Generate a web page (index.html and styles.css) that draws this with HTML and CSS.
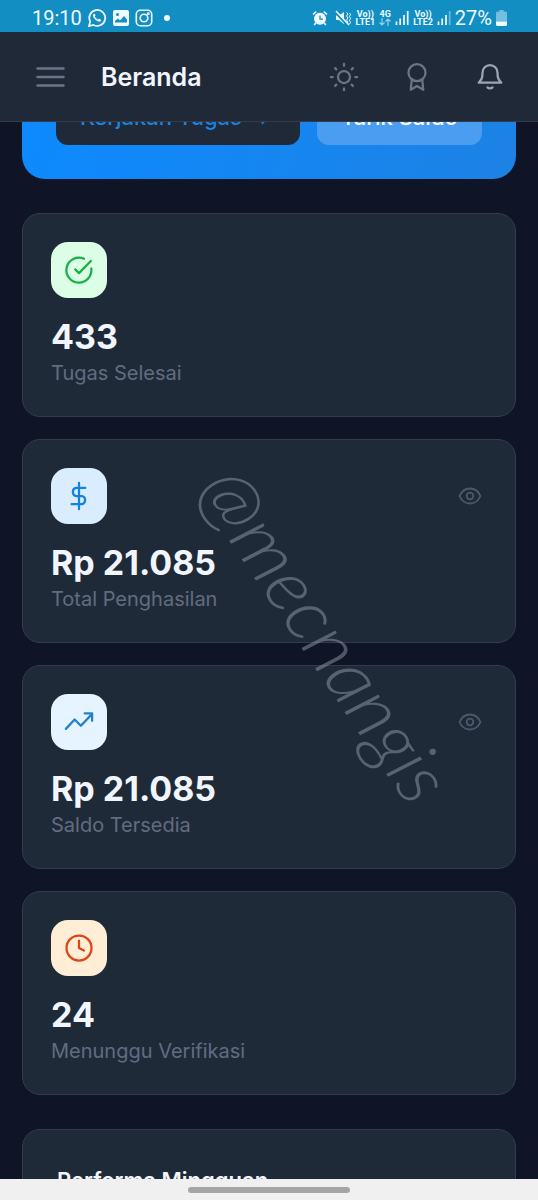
FILE: index.html
```html
<!DOCTYPE html>
<html lang="id">
<head>
<meta charset="utf-8">
<meta name="viewport" content="width=device-width, initial-scale=1">
<title>Beranda</title>
<link rel="stylesheet" href="styles.css">
</head>
<body>
<div class="status">
  <span class="clock">19:10</span>
  <svg class="s20" viewBox="0 0 20 20" fill="none" stroke="currentColor" stroke-width="1.7"><path d="M2 18l1.200-4.300A8 8 0 1 1 6.500 17z"/><path d="M6.700 5.800c-1.500 1-.8 3.400 1.300 5.500s4.500 3.300 5.800 1.700c.4-.7.3-1.300-.2-1.500l-1.400-.7c-.5-.2-.8.100-1.200.6-1.300-.4-2.700-1.700-3.100-2.900.6-.5.7-.8.5-1.200l-.6-1.300c-.3-.4-.7-.4-1.100-.2z" fill="currentColor" stroke="none"/></svg>
  <svg class="s18" viewBox="0 0 18 18"><path fill="currentColor" fill-rule="evenodd" d="M3 1h12a2 2 0 0 1 2 2v12a2 2 0 0 1-2 2H3a2 2 0 0 1-2-2V3a2 2 0 0 1 2-2zm0 12.500h12v-3L12 7l-4 4.500-2-2-3 2.500zM5.500 4a1.500 1.500 0 1 0 0 3 1.500 1.500 0 0 0 0-3z"/></svg>
  <svg class="s18" viewBox="0 0 18 18" fill="none" stroke="currentColor" stroke-width="1.600"><rect x="1.300" y="1.300" width="15.400" height="15.400" rx="4"/><circle cx="9" cy="9" r="3.800"/><circle cx="13.300" cy="4.700" r=".6"/></svg>
  <span class="dot"></span>
  <div class="status-right">
    <svg class="s16" viewBox="0 0 16 16"><circle cx="8" cy="8.800" r="6" fill="currentColor"/><path d="M1 4.500L4.200 1.700M15 4.500l-3.200-2.800M3.700 13l-1.500 2M12.300 13l1.500 2" stroke="currentColor" stroke-width="1.600"/><path d="M8 5.500v3.600h3" stroke="#128ec3" stroke-width="1.300" fill="none"/></svg>
    <svg class="s16 mute" viewBox="0 0 16 16"><path d="M1 5.500h3L9 2v12l-5-4H1z" fill="currentColor"/><path d="M11.500 2.500l1.500 1.500-1.500 2L13 8l-1.500 2 1.500 2-1.500 2M14.500 3l1 1.500-1 2 1 2-1 2 1 2-1 1.500" stroke="currentColor" fill="none"/><path d="M0 2l12 13" stroke="#128ec3" stroke-width="2"/><path d="M1 1l13 14" stroke="currentColor" stroke-width="1.500"/></svg>
    <span class="net"><span>Vo))</span><span>LTE1</span></span>
    <span class="net"><span>4G</span><svg class="updown" viewBox="0 0 12 8" fill="none" stroke="currentColor" stroke-width="1.200"><path d="M3 0v7M.5 4.500L3 7l2.500-2.500M9 8V1M6.500 3.500L9 1l2.500 2.500"/></svg></span>
    <svg class="bars" viewBox="0 0 14 16" stroke="currentColor" stroke-width="1.700"><path d="M1.500 11.500v3.500M5.200 8.500v6.500M9 5v10M12.700 1v14"/></svg>
    <span class="net"><span>Vo))</span><span>LTE2</span></span>
    <svg class="bars" viewBox="0 0 14 16" stroke="currentColor" stroke-width="1.700"><path d="M1.500 11.500v3.500M5.200 8.500v6.500M9 5v10"/><path opacity=".4" d="M12.700 1v14"/></svg>
    <span class="pct">27%</span>
    <svg class="batt" viewBox="0 0 11 16" fill="currentColor"><path opacity=".45" d="M3.500 0h4v1.500H9.500A1.500 1.500 0 0 1 11 3v8.500H0V3a1.500 1.500 0 0 1 1.500-1.500h2z"/><path d="M0 11.500h11v3a1.500 1.500 0 0 1-1.500 1.500h-8A1.500 1.500 0 0 1 0 14.500z"/></svg>
  </div>
</div>

<header class="topbar">
  <button class="icon-btn" aria-label="Menu"><svg class="s34" viewBox="0 0 34 34"><path d="M4.500 8.500h26M4.500 17h26M4.500 25.500h26"/></svg></button>
  <h1>Beranda</h1>
  <div class="actions">
    <button class="icon-btn" aria-label="Tema"><svg class="s30" viewBox="0 0 24 24"><circle cx="12" cy="12" r="4.800"/><path d="M12 1.500v1.500M12 21v1.500M4.900 4.900l1 1M18.100 18.100l1 1M1.500 12H3M21 12h1.500M5.900 18.100l-1 1M19.100 4.900l-1 1"/></svg></button>
    <button class="icon-btn" aria-label="Peringkat"><svg class="s30" viewBox="0 0 24 24"><circle cx="12" cy="8.500" r="6.800"/><path d="M7.800 14L7 22.200l5-3 5 3-.8-8.200"/></svg></button>
    <button class="icon-btn bright" aria-label="Notifikasi"><svg class="s30" viewBox="0 0 24 24"><path d="M18 8.500A6 6 0 0 0 6 8.500c0 5-1.200 6-3 8h18C19.200 14.500 18 13.500 18 8.500zM10 20.300c1 1.100 3 1.100 4 0"/></svg></button>
  </div>
</header>

<main class="content">
  <section class="hero">
    <button class="hero-btn primary">Kerjakan Tugas <svg class="s22" viewBox="0 0 24 24"><path d="M9 5l7 7-7 7"/></svg></button>
    <button class="hero-btn ghost">Tarik Saldo</button>
  </section>

  <section class="stats">
    <article class="card">
      <div class="tile green"><svg class="s30" viewBox="0 0 24 24"><path d="M21.800 10.700A10 10 0 1 1 16 3"/><path d="M9 11.500l3 3 9.500-9.700"/></svg></div>
      <p class="value">433</p>
      <p class="label">Tugas Selesai</p>
    </article>
    <article class="card">
      <div class="tile blue"><svg class="s30" viewBox="0 0 24 24"><path d="M12 1.500v21M17 5.500H9.500a3.400 3.400 0 0 0 0 6.500h5a3.400 3.400 0 0 1 0 6.500H6"/></svg></div>
      <button class="eye" aria-label="Tampilkan penghasilan"><svg class="s24" viewBox="0 0 24 24"><path d="M1.500 12C6 2 18 2 22.500 12 18 22 6 22 1.500 12z"/><circle cx="12" cy="12" r="3.300"/></svg></button>
      <p class="value">Rp 21.085</p>
      <p class="label">Total Penghasilan</p>
    </article>
    <article class="card">
      <div class="tile sky"><svg class="s30" viewBox="0 0 24 24"><path d="M1.500 17.500L8.500 10l5 5 9-9.500M16.500 5h6v6"/></svg></div>
      <button class="eye" aria-label="Tampilkan saldo"><svg class="s24" viewBox="0 0 24 24"><path d="M1.500 12C6 2 18 2 22.500 12 18 22 6 22 1.500 12z"/><circle cx="12" cy="12" r="3.300"/></svg></button>
      <p class="value">Rp 21.085</p>
      <p class="label">Saldo Tersedia</p>
    </article>
    <article class="card">
      <div class="tile orange"><svg class="s30" viewBox="0 0 24 24"><circle cx="12" cy="12" r="10"/><path d="M12 6v6l4 2"/></svg></div>
      <p class="value">24</p>
      <p class="label">Menunggu Verifikasi</p>
    </article>
    <span class="watermark">@mecnangis</span>
  </section>

  <section class="card performance">
    <h2>Performa Mingguan</h2>
  </section>
</main>

<div class="gesture"><span class="handle"></span></div>
</body>
</html>
```
FILE: styles.css
```css
* { box-sizing: border-box; }
body {
  margin: 0;
  height: 100vh;
  display: flex;
  flex-direction: column;
  background: #0f1427;
  color: #f1f5fd;
  font-family: Inter, "Liberation Sans", sans-serif;
}
h1, h2, p { margin: 0; }
button {
  margin: 0;
  padding: 0;
  border: 0;
  background: none;
  color: inherit;
  font: inherit;
}
svg { display: block; flex: none; }
.s16 { width: 16px; height: 16px; }
.s18 { width: 18px; height: 18px; }
.s20 { width: 20px; height: 20px; }
.s22 { width: 22px; height: 22px; }
.s24 { width: 24px; height: 24px; }
.s30 { width: 30px; height: 30px; }
.s34 { width: 34px; height: 34px; }

.status {
  flex: none;
  display: flex;
  align-items: center;
  gap: 5px;
  height: 32px;
  padding: 4px 31px 0 32px;
  background: #128ec3;
  color: #f0fbff;
  font-family: Roboto, sans-serif;
}
.clock, .pct { font-size: 20px; line-height: 24px; }
.dot {
  width: 6px;
  height: 6px;
  margin-left: 6px;
  border-radius: 50%;
  background: currentColor;
}
.status-right {
  display: flex;
  align-items: center;
  gap: 4px;
  margin-left: auto;
}
.mute { margin: 0 1px 0 3px; }
.net {
  display: flex;
  flex-direction: column;
  align-items: center;
  font-size: 9px;
  line-height: 8px;
  font-weight: 700;
}
.updown { width: 12px; height: 8px; opacity: .6; }
.bars { width: 14px; height: 16px; }
.batt { width: 11px; height: 16px; }

.topbar {
  flex: none;
  display: flex;
  align-items: center;
  height: 90px;
  padding: 0 33px;
  background: #1f2937;
  border-bottom: 1px solid #323c4b;
}
.topbar h1 {
  margin-left: 34px;
  font-size: 25px;
  line-height: 32px;
  font-weight: 600;
}
.actions {
  display: flex;
  gap: 43px;
  margin-left: auto;
}
.icon-btn svg, .hero-btn svg, .tile svg, .eye svg {
  fill: none;
  stroke: currentColor;
  stroke-width: 1.8;
  stroke-linecap: round;
  stroke-linejoin: round;
}
.icon-btn { color: #6b7587; }
.icon-btn .s34 { stroke-width: 2.5; }
.icon-btn.bright { color: #9ca5b5; }

.content {
  flex: 1;
  min-height: 0;
  padding: 0 22px 34px;
  overflow-x: hidden;
  overflow-y: auto;
  scrollbar-width: none;
}
.hero {
  display: flex;
  gap: 17px;
  margin: -67px 0 34px;
  padding: 34px;
  border-radius: 23px;
  background: linear-gradient(100deg, #0d8aff, #1d82e4);
}
.hero-btn {
  display: flex;
  align-items: center;
  justify-content: center;
  gap: 12px;
  height: 56px;
  padding: 0 24px;
  border-radius: 12px;
  font-size: 22px;
  line-height: 28px;
  font-weight: 500;
}
.primary {
  background: #1f2937;
  color: #1d83df;
}
.ghost {
  background: #4a9df0;
  color: #fff;
}

.stats {
  position: relative;
  display: grid;
  gap: 22px;
}
.card {
  position: relative;
  padding: 28px;
  border: 1px solid #323c4b;
  border-radius: 18px;
  background: #1f2a39;
}
.tile {
  display: grid;
  place-items: center;
  width: 56px;
  height: 56px;
  margin-bottom: 17px;
  border-radius: 17px;
}
.green { background: #dcfee7; color: #17b047; }
.blue { background: #d9edfe; color: #1583dd; }
.sky { background: #e6f4ff; color: #2280d0; }
.orange { background: #ffedd5; color: #dc4516; }
.value {
  font-size: 34px;
  line-height: 44px;
  font-weight: 700;
}
.label {
  color: #626c80;
  font-size: 20px;
  line-height: 29px;
}
.eye {
  position: absolute;
  top: 44px;
  right: 33px;
  color: #4d596b;
}
.watermark {
  position: absolute;
  left: 197px;
  top: 221px;
  transform: rotate(56deg);
  transform-origin: 0 50%;
  color: #919aa780;
  font-family: Lato, "Liberation Sans", sans-serif;
  font-size: 76px;
  line-height: 80px;
  font-style: italic;
  font-weight: 300;
  pointer-events: none;
}
.performance {
  margin-top: 34px;
  padding: 34px;
  min-height: 200px;
}
.performance h2 {
  font-size: 22px;
  line-height: 32px;
  font-weight: 600;
}

.gesture {
  flex: none;
  display: flex;
  justify-content: center;
  align-items: center;
  height: 21px;
  background: #f0f0f0;
}
.handle {
  width: 30%;
  height: 6px;
  border-radius: 3px;
  background: #a5a5a5;
}
```
